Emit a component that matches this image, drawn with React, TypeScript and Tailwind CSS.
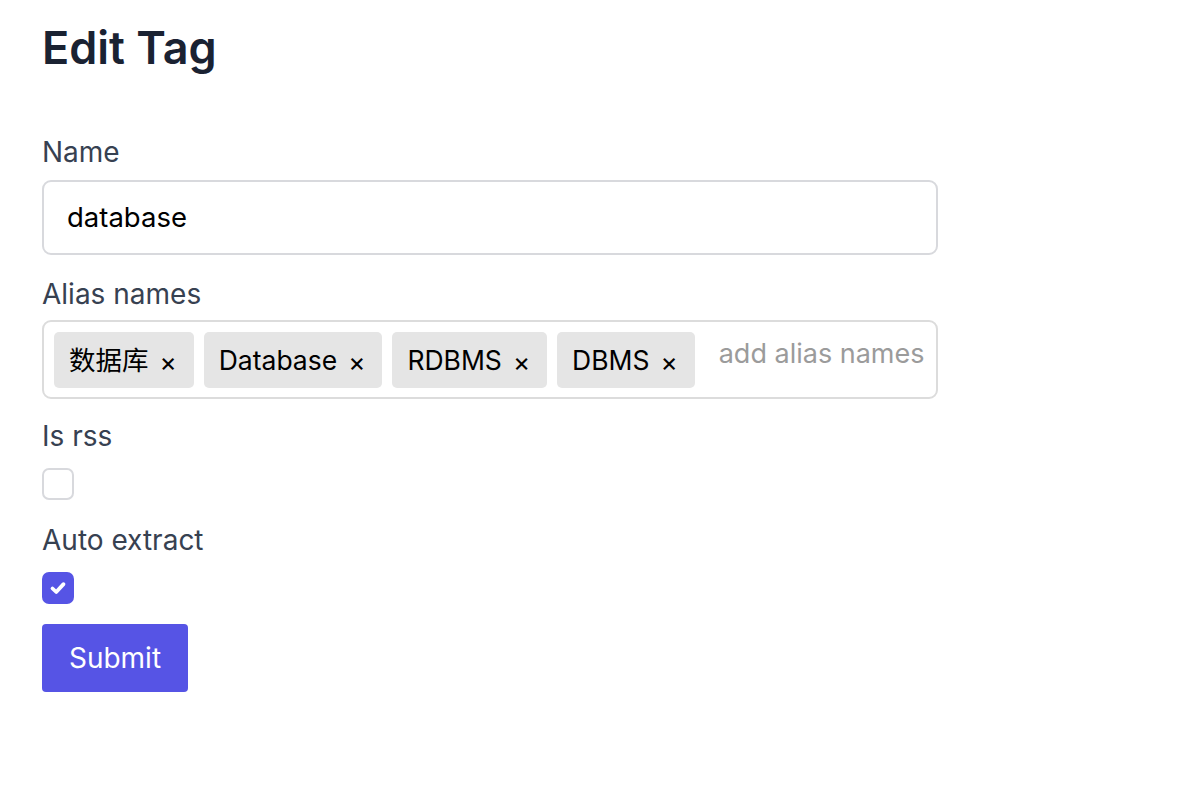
import React from "react";

const tags = ["数据库", "Database", "RDBMS", "DBMS"];

export default function App() {
  return (
    <div
      className="min-h-[804px] bg-white pl-[42px] pt-[21px]"
      style={{ fontFamily: 'Inter, "Noto Sans CJK SC", sans-serif' }}
    >
      <h1 className="text-[45px] leading-[54px] font-semibold text-[#1a2232]">Edit Tag</h1>
      <form className="mt-[59px] flex w-[896px] flex-col" onSubmit={(e) => e.preventDefault()}>
        <label className="text-[28px] leading-[36px] text-[#374151]">Name</label>
        <div className="mt-[10px] flex h-[75px] items-center rounded-[9px] border-2 border-[#d8d9dd] pl-[23px] text-[27.5px] text-black">
          database
        </div>

        <label className="mt-[21px] text-[28px] leading-[36px] text-[#374151]">Alias names</label>
        <div className="mt-[8px] flex h-[79px] items-center gap-[10px] rounded-[9px] border-2 border-[#dcdcdc] pl-[10px]">
          {tags.map((t) => (
            <span
              key={t}
              className="flex h-[56px] items-center rounded-[5px] bg-[#e5e5e5] pl-[15px] pr-[17px] pt-[3px] text-[26.5px] text-black"
            >
              {t}
              <span className="ml-[11px] text-[26px]">×</span>
            </span>
          ))}
          <span className="ml-[14px] -mt-[10px] text-[27px] text-[#9b9b9b]">add alias names</span>
        </div>

        <label className="mt-[19px] text-[28px] leading-[36px] text-[#374151]">Is rss</label>
        <div className="mt-[14px] h-[32px] w-[32px] rounded-[7px] border-2 border-[#d8d9dd] bg-white" />

        <label className="mt-[22px] text-[28px] leading-[36px] text-[#374151]">Auto extract</label>
        <div className="mt-[14px] flex h-[32px] w-[32px] items-center justify-center rounded-[7px] bg-[#5654e5]">
          <svg width="20" height="20" viewBox="0 0 16 16" fill="none">
            <path d="M3.6 8.4 L6.6 11.2 L12.4 4.9" stroke="white" strokeWidth="3" strokeLinecap="round" strokeLinejoin="round" />
          </svg>
        </div>

        <div className="mt-[20px]">
          <button
            type="submit"
            className="h-[68px] w-[146px] rounded-[4px] bg-[#5654e5] text-[28px] text-white"
          >
            Submit
          </button>
        </div>
      </form>
    </div>
  );
}
